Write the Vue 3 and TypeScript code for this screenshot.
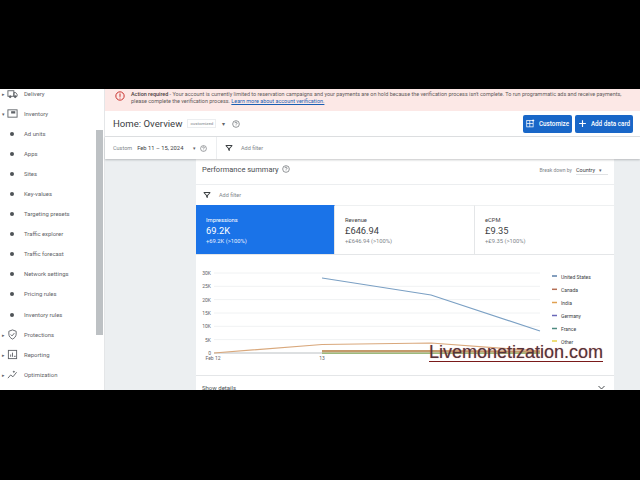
<script setup lang="ts">
const subItems = ['Ad units', 'Apps', 'Sites', 'Key-values', 'Targeting presets', 'Traffic explorer', 'Traffic forecast', 'Network settings', 'Pricing rules', 'Inventory rules']

const kpis = [
  { label: 'Impressions', value: '69.2K', delta: '+69.2K (>100%)', active: true },
  { label: 'Revenue', value: '£646.94', delta: '+£646.94 (>100%)', active: false },
  { label: 'eCPM', value: '£9.35', delta: '+£9.35 (>100%)', active: false },
]

const ticks = [
  { label: '30K', y: 273 }, { label: '25K', y: 286.3 }, { label: '20K', y: 299.6 },
  { label: '15K', y: 313 }, { label: '10K', y: 326.3 }, { label: '5K', y: 339.6 }, { label: '0', y: 353 },
]

const legend = [
  { name: 'United States', color: '#5b7fa8', y: 276 },
  { name: 'Canada', color: '#b56f55', y: 289.3 },
  { name: 'India', color: '#e0a050', y: 302.5 },
  { name: 'Germany', color: '#6a68b8', y: 315.5 },
  { name: 'France', color: '#4e8a80', y: 328.5 },
  { name: 'Other', color: '#e8d44b', y: 341 },
]
</script>

<template>
  <div class="stage">
    <aside class="side">
      <ul class="nav">
        <li class="row">
          <span class="arrow">▸</span>
          <svg class="ico" viewBox="0 0 24 24" fill="none" stroke="#5f6368" stroke-width="2"><rect x="2" y="6" width="13" height="12"/><path d="M15 10h4l3 4v4h-7z"/><circle cx="7" cy="19" r="2" fill="#5f6368"/><circle cx="18" cy="19" r="2" fill="#5f6368"/></svg>
          <span>Delivery</span>
        </li>
        <li class="row">
          <span class="arrow">▾</span>
          <svg class="ico" viewBox="0 0 24 24" fill="none" stroke="#5f6368" stroke-width="2"><rect x="2" y="4" width="20" height="16"/><rect x="9" y="7" width="9" height="5" fill="#5f6368" stroke="none"/></svg>
          <span>Inventory</span>
        </li>
        <li v-for="item in subItems" :key="item" class="row sub">
          <span class="dot"></span>
          <span>{{ item }}</span>
        </li>
        <li class="row">
          <span class="arrow">▸</span>
          <svg class="ico" viewBox="0 0 24 24" fill="none" stroke="#5f6368" stroke-width="2"><path d="M12 2l8 3v6c0 5-3.500 9-8 11-4.500-2-8-6-8-11V5z"/><path d="M8 12l3 3 5-6"/></svg>
          <span>Protections</span>
        </li>
        <li class="row">
          <span class="arrow">▸</span>
          <svg class="ico" viewBox="0 0 24 24" fill="none" stroke="#5f6368" stroke-width="2"><rect x="3" y="3" width="18" height="18"/><path d="M8 17v-5M12 17V8M15 16h4"/></svg>
          <span>Reporting</span>
        </li>
        <li class="row">
          <span class="arrow">▸</span>
          <svg class="ico" viewBox="0 0 24 24" fill="none" stroke="#5f6368" stroke-width="2"><path d="M2 20l6-7 5 4 8-10"/><path d="M15 3l1 2 2 1-2 1-1 2-1-2-2-1 2-1z" fill="#5f6368" stroke="none"/></svg>
          <span>Optimization</span>
        </li>
      </ul>
      <div class="thumb"></div>
    </aside>

    <main class="main">
      <div class="banner">
        <svg class="alert" viewBox="0 0 24 24" fill="none" stroke="#c5221f" stroke-width="2.200"><circle cx="12" cy="12" r="10"/><path d="M12 6v8M12 16v2"/></svg>
        <p>
          <b>Action required</b> - Your account is currently limited to reservation campaigns and your payments are on hold because the verification process isn't complete. To run programmatic ads and receive payments,<br>
          please complete the verification process. <a>Learn more about account verification.</a>
        </p>
      </div>

      <header class="head">
        <h1>Home: Overview</h1>
        <span class="chip">customized</span>
        <span class="caret">▾</span>
        <svg class="help" viewBox="0 0 24 24" fill="none" stroke="#5f6368" stroke-width="2"><circle cx="12" cy="12" r="10"/><path d="M9 9.500a3 3 0 1 1 4.500 2.600c-1 .6-1.500 1.200-1.500 2.400M12 17v1"/></svg>
        <button class="btn cust">
          <svg viewBox="0 0 24 24" fill="none" stroke="#fff" stroke-width="2"><rect x="2" y="4" width="17" height="17"/><path d="M10 4v17M2 12h17M19 1v6M16 4h6"/></svg>
          Customize
        </button>
        <button class="btn add">
          <svg viewBox="0 0 24 24" fill="none" stroke="#fff" stroke-width="3"><path d="M12 3v18M3 12h18"/></svg>
          Add data card
        </button>
      </header>

      <div class="filters">
        <div class="dates">
          <span class="muted">Custom</span>
          <span class="range">Feb 11 – 15, 2024</span>
          <span class="caret small">▾</span>
          <svg class="help tiny" viewBox="0 0 24 24" fill="none" stroke="#5f6368" stroke-width="2"><circle cx="12" cy="12" r="10"/><path d="M9 9.500a3 3 0 1 1 4.500 2.600c-1 .6-1.500 1.200-1.500 2.400M12 17v1"/></svg>
        </div>
        <div class="add-filter">
          <svg class="funnel" viewBox="0 0 24 24" fill="#3c4043"><path d="M2 3h20v3l-7.500 8v7l-5-2v-5L2 6zm3.500 3l6.500 7 6.500-7z"/></svg>
          <span class="muted">Add filter</span>
        </div>
      </div>

      <div class="content">
        <section class="card">
          <div class="card-head">
            <h2>Performance summary</h2>
            <svg class="help sum" viewBox="0 0 24 24" fill="none" stroke="#5f6368" stroke-width="2"><circle cx="12" cy="12" r="10"/><path d="M9 9.500a3 3 0 1 1 4.500 2.600c-1 .6-1.500 1.200-1.500 2.400M12 17v1"/></svg>
            <div class="breakdown">
              <span class="break">Break down by</span>
              <span class="country">Country <i>▾</i></span>
            </div>
          </div>
          <div class="add-filter inner">
            <svg class="funnel" viewBox="0 0 24 24" fill="#3c4043"><path d="M2 3h20v3l-7.500 8v7l-5-2v-5L2 6zm3.500 3l6.500 7 6.500-7z"/></svg>
            <span class="muted">Add filter</span>
          </div>
          <div class="kpis">
            <div v-for="k in kpis" :key="k.label" class="kpi" :class="{ active: k.active }">
              <span class="k-label">{{ k.label }}</span>
              <span class="k-value">{{ k.value }}</span>
              <span class="k-delta">{{ k.delta }}</span>
            </div>
          </div>
          <svg class="chart" viewBox="196 255 418 120" width="418" height="120">
            <g v-for="t in ticks" :key="t.label">
              <line x1="214" x2="540" :y1="t.y" :y2="t.y" stroke="#f0f2f3" stroke-width="1" />
              <text x="211" :y="t.y + 2" text-anchor="end" class="tick">{{ t.label }}</text>
            </g>
            <line x1="214" x2="322" y1="353" y2="353" stroke="#d5d7d9" stroke-width="1.500" />
            <polyline points="322,278 431,295 540,331" fill="none" stroke="#7ba0c4" stroke-width="1.200" />
            <polyline points="214,353 322,344.500 431,343 540,351" fill="none" stroke="#d9a87c" stroke-width="1.200" />
            <polyline points="322,351.200 431,351.200 540,351.800" fill="none" stroke="#c49a6c" stroke-width="2.400" />
            <polyline points="322,353.300 431,353.300 540,353.300" fill="none" stroke="#9cba7c" stroke-width="1.600" />
            <text x="213" y="360" text-anchor="middle" class="tick">Feb 12</text>
            <text x="322" y="360" text-anchor="middle" class="tick">13</text>
            <g v-for="l in legend" :key="l.name">
              <line x1="552" x2="557" :y1="l.y" :y2="l.y" :stroke="l.color" stroke-width="1.500" />
              <text x="561" :y="l.y + 2.500" class="tick dark">{{ l.name }}</text>
            </g>
          </svg>
          <div class="details">
            <span>Show details</span>
            <svg viewBox="0 0 24 24" fill="none" stroke="#3c4043" stroke-width="2.500"><path d="M4 8l8 8 8-8"/></svg>
          </div>
        </section>
      </div>
    </main>

    <div class="mark">Livemonetization.com</div>
  </div>
</template>

<style scoped>
.stage { position:relative; display:flex; width:640px; height:301px; margin-top:89px; overflow:hidden; background:#fff; font-family:Roboto, "Liberation Sans", sans-serif; color:#3c4043; }

.side { position:relative; width:105px; flex-shrink:0; background:#fff; border-right:1px solid #e4e6e8; box-sizing:border-box; }
.nav { list-style:none; margin:-5.500px 0 0; padding:0; }
.row { display:flex; align-items:center; height:20.100px; padding-left:2px; font-size:5.900px; color:#5f6368; }
.arrow { width:5px; font-size:5px; color:#5f6368; }
.ico { width:11px; height:11px; margin-right:6px; flex-shrink:0; }
.sub { padding-left:10px; }
.dot { width:4px; height:4px; border-radius:50%; background:#4f5357; margin-right:10px; }
.thumb { position:absolute; left:96px; top:41px; width:7px; height:205px; background:#bdc1c4; }

.main { flex:1; display:flex; flex-direction:column; min-width:0; background:#eceff1; }
.banner { display:flex; align-items:center; height:22px; background:#fce8e6; flex-shrink:0; box-sizing:border-box; padding:0 0 5px 10px; }
.alert { width:10px; height:10px; flex-shrink:0; margin:0 6px 0 0; position:relative; top:-2px; }
.banner p { margin:0; font-size:5.450px; line-height:7px; color:#5f5a5a; white-space:nowrap; }
.banner b { font-weight:500; color:#4a4040; }
.banner a { color:#1a5fb4; text-decoration:underline; }

.head { display:flex; align-items:center; height:26px; box-sizing:border-box; background:#fff; border-bottom:1px solid #e0e2e4; padding:0 7px 0 8px; flex-shrink:0; }
.head h1 { margin:0; font-size:9.600px; font-weight:400; color:#3c4043; }
.chip { margin-left:5px; width:29px; text-align:center; font-size:4.400px; line-height:7px; color:#80868b; border:1px solid #eceef0; box-sizing:border-box; white-space:nowrap; }
.caret { margin-left:6px; font-size:6px; color:#5f6368; }
.help { width:8px; height:8px; margin-left:7px; }
.btn { display:flex; align-items:center; height:18px; border:none; border-radius:2px; background:#1967c8; color:#fff; font-family:inherit; font-size:6.300px; font-weight:500; padding:0; justify-content:center; }
.btn svg { width:9px; height:9px; margin-right:4px; }
.cust { width:49px; margin-left:auto; margin-right:3px; }
.add { width:58px; }

.filters { display:flex; align-items:center; height:22px; background:#fff; box-shadow:0 1px 2px rgba(60,64,67,.3); flex-shrink:0; position:relative; }
.dates { display:flex; align-items:center; width:112px; height:100%; padding-left:8px; box-sizing:border-box; border-right:1px solid #eceef0; }
.muted { font-size:5.500px; color:#80868b; }
.range { font-size:5.800px; margin-left:5px; color:#3c4043; }
.small { margin-left:10px; font-size:5px; }
.tiny { width:7px; height:7px; margin-left:4px; }
.add-filter { display:flex; align-items:center; padding-left:8px; }
.funnel { width:8px; height:8px; margin-right:8px; }

.content { flex:1; padding-left:91px; padding-right:26px; min-height:0; }
.card { background:#fff; height:100%; }
.card-head { display:flex; align-items:center; height:26px; box-sizing:border-box; border-bottom:1px solid #eceef0; padding:0 6px 5px 6px; }
.card-head h2 { margin:0; font-size:7.500px; font-weight:400; color:#4a4e52; }
.sum { margin-left:3px; }
.breakdown { display:flex; align-items:center; margin-left:auto; height:100%; box-sizing:border-box; padding-top:2px; }
.break { font-size:5px; color:#80868b; }
.country { margin-left:4px; font-size:5.500px; color:#3c4043; padding:1.500px 0; border-bottom:1px solid #e0e2e4; width:32px; }
.country i { font-style:normal; font-size:5px; margin-left:3px; color:#5f6368; }
.inner { height:20px; padding-left:7px; }
.kpis { display:grid; grid-template-columns:139px 140px 139px; height:50px; border-bottom:1px solid #e4e6e8; box-sizing:border-box; }
.kpi { display:flex; flex-direction:column; padding:10px 0 0 10px; border-right:1px solid #e4e6e8; border-top:1px solid #eef0f1; }
.kpi:last-child { border-right:none; }
.kpi.active { background:#1a73e8; color:#fff; border-top-color:#1a73e8; }
.k-label { font-size:5.800px; line-height:8px; }
.k-value { font-size:9.300px; line-height:13px; }
.k-delta { font-size:5.800px; line-height:9px; color:#80868b; }
.active .k-delta { color:#e8f0fe; }
.chart { display:block; }
.tick { font-size:5px; fill:#5f6368; font-family:Roboto, "Liberation Sans", sans-serif; }
.tick.dark { fill:#3c4043; }
.details { display:flex; align-items:center; justify-content:space-between; height:24px; border-top:1px solid #e4e6e8; padding:0 8px 0 6px; font-size:6px; color:#4a4e52; box-sizing:border-box; }
.details svg { width:9px; height:9px; }

.mark { position:absolute; left:429px; top:256.500px; font-family:"Liberation Sans", Arial, sans-serif; font-size:18px; line-height:13px; padding-bottom:2px; color:#54343a; text-shadow:0 0 1px rgba(200,40,40,.5); border-bottom:1px solid #7a1a1a; }
</style>

<style>
html, body { background:#000; }
</style>
